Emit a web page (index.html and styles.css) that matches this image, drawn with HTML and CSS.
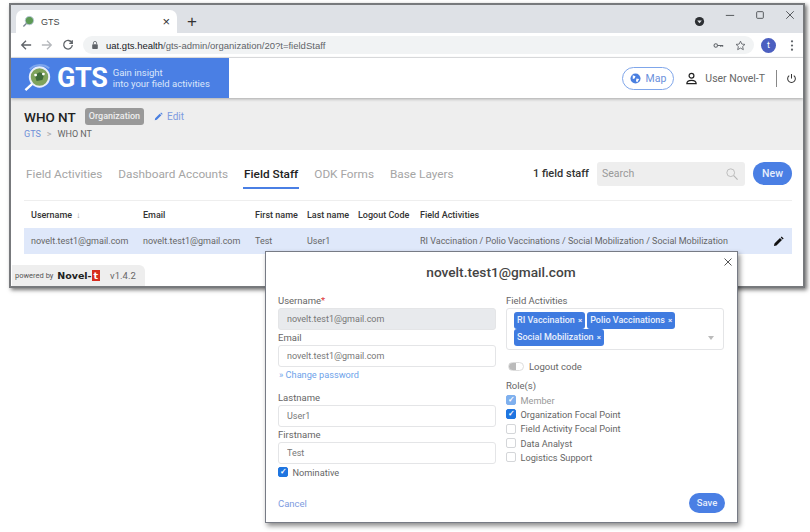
FILE: index.html
```html
<!DOCTYPE html>
<html lang="en">
<head>
    <meta charset="UTF-8">
    <link rel="stylesheet" href="styles.css">
    <title>GTS</title>
</head>
<body>
    <div class="window">
        <div class="tabstrip">
            <div class="tab">
                <svg class="favicon" viewBox="0 0 14 14"><circle cx="8" cy="6" r="4.500" fill="#5d9a55" stroke="#b9c7d8"/><path d="M5 9l-3.500 3.500" stroke="#7b8794" stroke-width="1.500"/></svg>
                <span class="tab-title">GTS</span>
                <span class="tab-close">×</span>
            </div>
            <span class="tab-new">+</span>
            <span class="chrome-spacer"></span>
            <svg class="win-badge" viewBox="0 0 12 12"><circle cx="6" cy="6" r="5" fill="#2c2f33"/><path d="M3.500 4.800h5L6 8z" fill="#dee1e6"/></svg>
            <svg class="win-btn" viewBox="0 0 12 12"><path d="M1 6.500h10" stroke="#3c4043"/></svg>
            <svg class="win-btn" viewBox="0 0 12 12"><rect x="2" y="2" width="8" height="8" rx="1" fill="none" stroke="#3c4043"/></svg>
            <svg class="win-btn" viewBox="0 0 12 12"><path d="M1.500 1.500l9 9M10.500 1.500l-9 9" stroke="#3c4043"/></svg>
        </div>
        <div class="toolbar">
            <svg class="nav-icon" viewBox="0 0 14 14"><path d="M13 7H2M7 2L2 7l5 5" fill="none" stroke="#5f6368" stroke-width="1.500"/></svg>
            <svg class="nav-icon" viewBox="0 0 14 14"><path d="M1 7h11M7 2l5 5-5 5" fill="none" stroke="#b5b8bc" stroke-width="1.500"/></svg>
            <svg class="nav-icon" viewBox="0 0 14 14"><path d="M11.500 4.500A5 5 0 1 0 12 7M12 1.500v3.500H8.500" fill="none" stroke="#5f6368" stroke-width="1.500"/></svg>
            <div class="omnibox">
                <svg class="lock" viewBox="0 0 10 12"><rect x="1.500" y="5" width="7" height="6" rx="1" fill="#5f6368"/><path d="M3 5V3.500a2 2 0 0 1 4 0V5" fill="none" stroke="#5f6368"/></svg>
                <span class="url"><b>uat.gts.health</b>/gts-admin/organization/20?t=fieldStaff</span>
                <span class="chrome-spacer"></span>
                <svg class="omni-icon" viewBox="0 0 14 14"><circle cx="3.500" cy="7" r="2.200" fill="none" stroke="#5f6368" stroke-width="1.300"/><path d="M6 7h7M10 7v2M12.300 7v1.500" fill="none" stroke="#5f6368" stroke-width="1.300"/></svg>
                <svg class="omni-icon" viewBox="0 0 14 14"><path d="M7 1.500l1.700 3.700 4 .4-3 2.700.9 4L7 10.300l-3.600 2 .9-4-3-2.700 4-.4z" fill="none" stroke="#5f6368" stroke-width="1.100"/></svg>
            </div>
            <span class="avatar">t</span>
            <svg class="dots" viewBox="0 0 4 14"><circle cx="2" cy="2.500" r="1.200" fill="#5f6368"/><circle cx="2" cy="7" r="1.200" fill="#5f6368"/><circle cx="2" cy="11.500" r="1.200" fill="#5f6368"/></svg>
        </div>
        <header class="app-header">
            <div class="brand">
                <svg class="brand-mark" viewBox="0 0 34 30">
                    <path d="M7 6a15 15 0 0 1 20 -1" fill="none" stroke="#7ea6ec" stroke-width="2"/>
                    <circle cx="17" cy="14" r="10" fill="#7fa35c" stroke="#e8eefb" stroke-width="2"/>
                    <path d="M12 12l5-3 5 2-2 6-6 1z" fill="#3f6b3a"/>
                    <circle cx="13" cy="12" r="1.500" fill="#fff"/><circle cx="21" cy="11" r="1.500" fill="#fff"/>
                    <path d="M9.500 21L2.500 27.500" stroke="#fff" stroke-width="2.500"/>
                </svg>
                <span class="brand-name">GTS</span>
                <span class="brand-tag">Gain insight<br>into your field activities</span>
            </div>
            <div class="header-right">
                <a class="map-btn">
                    <svg class="map-globe" viewBox="0 0 12 12"><circle cx="6" cy="6" r="5.500" fill="#4a7fe0"/><path d="M3 2.500l3 1-1 2.500-2 .5zM7 6l3 .5-2 3.500-1.500-1z" fill="#fff"/></svg>
                    Map
                </a>
                <svg class="user-icon" viewBox="0 0 14 14"><circle cx="7" cy="4" r="2.600" fill="none" stroke="#222" stroke-width="1.300"/><path d="M2 12.500c0-2.500 2-3.500 5-3.500s5 1 5 3.500z" fill="none" stroke="#222" stroke-width="1.300"/></svg>
                <span class="user-name">User Novel-T</span>
                <span class="header-sep"></span>
                <svg class="power" viewBox="0 0 12 12"><path d="M6 1v5M3.500 2.800a4.200 4.200 0 1 0 5 0" fill="none" stroke="#333" stroke-width="1.100"/></svg>
            </div>
        </header>
        <div class="page-head">
            <div class="title-row">
                <h1>WHO NT</h1>
                <span class="badge">Organization</span>
                <a class="edit">
                    <svg class="edit-icon" viewBox="0 0 12 12"><path d="M1 11l.6-2.800 6-6 2.200 2.200-6 6zM8.400 1.500l1-1 2.200 2.200-1 1z" fill="#4a7fe0"/></svg>
                    Edit
                </a>
            </div>
            <div class="crumbs"><a>GTS</a><span class="crumb-sep">&gt;</span><span>WHO NT</span></div>
        </div>
        <main class="content">
            <div class="tools">
                <nav class="tabs">
                    <a>Field Activities</a>
                    <a>Dashboard Accounts</a>
                    <a class="active">Field Staff</a>
                    <a>ODK Forms</a>
                    <a>Base Layers</a>
                </nav>
                <span class="count">1 field staff</span>
                <div class="search">
                    <span>Search</span>
                    <svg class="search-icon" viewBox="0 0 14 14"><circle cx="5.500" cy="5.500" r="4.500" fill="none" stroke="#b5b5b5"/><path d="M9 9l4.500 4.500" stroke="#b5b5b5" stroke-width="1.300"/></svg>
                </div>
                <a class="btn-primary btn-new">New</a>
            </div>
            <div class="table">
                <div class="row row-head">
                    <span class="c1">Username <small>↓</small></span>
                    <span class="c2">Email</span>
                    <span class="c3">First name</span>
                    <span class="c4">Last name</span>
                    <span class="c5">Logout Code</span>
                    <span class="c6">Field Activities</span>
                </div>
                <div class="row row-body">
                    <span class="c1">novelt.test1@gmail.com</span>
                    <span class="c2">novelt.test1@gmail.com</span>
                    <span class="c3">Test</span>
                    <span class="c4">User1</span>
                    <span class="c5"></span>
                    <span class="c6">RI Vaccination / Polio Vaccinations / Social Mobilization / Social Mobilization</span>
                    <svg class="row-edit" viewBox="0 0 12 12"><path d="M1 11l.6-2.800 6-6 2.200 2.200-6 6zM8.400 1.500l1-1 2.200 2.200-1 1z" fill="#111"/></svg>
                </div>
            </div>
        </main>
        <div class="powered">powered by <b class="novel">Novel-<i>t</i></b><span class="version">v1.4.2</span></div>
    </div>

    <form class="modal">
        <svg class="modal-close" viewBox="0 0 8 8"><path d="M.5.500l7 7M7.500.500l-7 7" stroke="#555"/></svg>
        <h2>novelt.test1@gmail.com</h2>
        <div class="modal-cols">
            <div class="col">
                <label class="field-label">Username<em>*</em></label>
                <input class="input input-off" type="text" value="novelt.test1@gmail.com" disabled>
                <label class="field-label">Email</label>
                <input class="input" type="text" value="novelt.test1@gmail.com">
                <a class="change-pass">» Change password</a>
                <label class="field-label label-last">Lastname</label>
                <input class="input" type="text" value="User1">
                <label class="field-label">Firstname</label>
                <input class="input" type="text" value="Test">
                <div class="check check-nom"><span class="box on">✓</span>Nominative</div>
            </div>
            <div class="col">
                <label class="field-label">Field Activities</label>
                <div class="multi">
                    <span class="chip">RI Vaccination<i>×</i></span>
                    <span class="chip">Polio Vaccinations<i>×</i></span>
                    <span class="chip">Social Mobilization<i>×</i></span>
                    <span class="caret"></span>
                </div>
                <div class="logout"><span class="toggle"></span>Logout code</div>
                <label class="field-label">Role(s)</label>
                <div class="check check-off"><span class="box on faded">✓</span>Member</div>
                <div class="check"><span class="box on">✓</span>Organization Focal Point</div>
                <div class="check"><span class="box"></span>Field Activity Focal Point</div>
                <div class="check"><span class="box"></span>Data Analyst</div>
                <div class="check"><span class="box"></span>Logistics Support</div>
            </div>
        </div>
        <div class="modal-foot">
            <a class="cancel">Cancel</a>
            <a class="btn-primary btn-save">Save</a>
        </div>
    </form>
</body>
</html>
```

FILE: styles.css
```css
* { box-sizing: border-box; }
body { margin: 0; background: #fff; font-family: Roboto, "Liberation Sans", sans-serif; color: #555; overflow: hidden; height: 532px; position: relative; }
h1, h2 { margin: 0; }

/* browser window */
.window { position: relative; width: 796px; height: 285px; margin: 3px 0 0 9px; border: 2px solid #77797c; box-shadow: 2px 2px 4px rgba(0,0,0,.55); background: #fff; overflow: hidden; }
.tabstrip { height: 28px; background: #dee1e6; display: flex; align-items: flex-end; padding-left: 5px; }
.tab { width: 161px; height: 23px; background: #fff; border-radius: 7px 7px 0 0; display: flex; align-items: center; padding: 0 7px 0 6px; font-family: "Liberation Sans", sans-serif; font-size: 9px; color: #444; }
.favicon { width: 13px; height: 13px; margin-right: 6px; }
.tab-title { flex: 1; }
.tab-close { font-size: 13px; color: #333; }
.tab-new { font-family: "Liberation Sans", sans-serif; font-size: 17px; line-height: 23px; width: 30px; text-align: center; color: #333; }
.chrome-spacer { flex: 1; }
.win-badge { width: 11px; height: 11px; margin: 0 20px 6px 0; }
.win-btn { width: 10px; height: 10px; margin: 0 20px 13px 0; }
.win-btn:last-child { margin-right: 8px; }
.toolbar { height: 25px; background: #fff; border-bottom: 1px solid #e3e4e6; display: flex; align-items: center; padding-left: 9px; }
.nav-icon { width: 12px; height: 12px; margin-right: 9px; }
.omnibox { width: 671px; height: 18px; background: #f1f3f4; border-radius: 9px; display: flex; align-items: center; padding: 0 8px 0 8px; }
.lock { width: 8px; height: 10px; margin-right: 7px; }
.url { font-family: "Liberation Sans", sans-serif; font-size: 9.500px; color: #5f6368; }
.url b { font-weight: 400; color: #202124; }
.omni-icon { width: 11px; height: 11px; margin-left: 11px; }
.avatar { width: 15px; height: 15px; margin-left: 7px; border-radius: 50%; background: #4c5fc0; color: #fff; font-size: 9px; text-align: center; line-height: 15px; }
.dots { width: 4px; height: 13px; margin-left: 14px; }

/* app header */
.app-header { position: relative; height: 40px; background: #fff; display: flex; justify-content: space-between; box-shadow: 0 1px 3px rgba(0,0,0,.3); }
.brand { width: 218px; background: #4a7fe4; display: flex; align-items: center; padding-left: 12px; color: #fff; }
.brand-mark { width: 33px; height: 30px; }
.brand-name { font-size: 27px; font-weight: 700; margin-left: 1px; letter-spacing: -.3px; }
.brand-tag { margin-left: 5px; font-size: 9.500px; line-height: 11px; color: #dbe6fb; }
.header-right { display: flex; align-items: center; padding-right: 6px; }
.map-btn { display: flex; align-items: center; height: 23px; padding: 0 7px; border: 1px solid #7fa6ea; border-radius: 12px; font-size: 10.500px; color: #6a90dc; }
.map-globe { width: 11px; height: 11px; margin-right: 5px; }
.user-icon { width: 13px; height: 13px; margin-left: 11px; }
.user-name { margin-left: 7px; font-size: 10.500px; color: #666; }
.header-sep { width: 1px; height: 17px; margin: 0 9px 0 11px; background: #888; }
.power { width: 11px; height: 11px; }

.page-head { height: 52px; background: #eee; padding: 9px 13px; }
.title-row { display: flex; align-items: center; height: 19px; }
h1 { font-size: 13.500px; font-weight: 500; color: #222; }
.badge { margin-left: 9px; padding: 0 4px; height: 17px; line-height: 17px; border-radius: 3px; background: #999; color: #eee; font-size: 9px; font-weight: 500; }
.edit { display: flex; align-items: center; margin-left: 10px; font-size: 10px; color: #7d9be0; }
.edit-icon { width: 9px; height: 9px; margin-right: 4px; }
.crumbs { margin-top: 3px; font-size: 9px; color: #666; display: flex; }
.crumbs a { color: #6f8fd8; }
.crumb-sep { margin: 0 6px; color: #aaa; }

/* tabs and table */
.content { padding: 10px 11px 0 13px; }
.tools { display: flex; align-items: center; height: 27px; }
.tabs { flex: 1; display: flex; gap: 16px; font-size: 11.800px; color: #a5a5a5; height: 27px; padding-top: 7px; padding-left: 2px; }
.tabs a { height: 25px; }
.tabs .active { color: #222; font-weight: 500; border-bottom: 2px solid #4a7fe4; height: 22px; margin: 0 -1px; padding: 0 1px; }
.count { font-size: 11px; color: #333; margin-right: 8px; font-weight: 500; }
.search { width: 148px; height: 24px; background: #eee; border-radius: 3px; padding: 0 7px 0 5px; display: flex; align-items: center; justify-content: space-between; font-size: 10.500px; color: #999; }
.search-icon { width: 12px; height: 12px; }
.btn-primary { background: #4a7fe4; color: #e6eefc; font-weight: 500; font-size: 10.500px; text-align: center; display: block; }
.btn-new { width: 39px; height: 23px; line-height: 23px; border-radius: 12px; margin-left: 8px; }
.table { margin-top: 13px; border-top: 1px solid #eee; }
.row { display: flex; align-items: center; font-size: 9px; padding-left: 7px; }
.row-head { height: 27px; color: #333; font-weight: 500; }
.row-head small { color: #999; font-size: 8px; margin-left: 2px; }
.row-body { position: relative; height: 26px; background: #dfe8fa; color: #666; }
.c1 { width: 112px; }
.c2 { width: 112px; }
.c3 { width: 52px; }
.c4 { width: 51px; }
.c5 { width: 62px; }
.c6 { white-space: nowrap; }
.row-edit { position: absolute; right: 8px; top: 8px; width: 11px; height: 11px; }
.powered { position: absolute; left: 1px; bottom: 0; width: 133px; height: 21px; padding: 0 5px 0 3px; border-radius: 0 6px 0 0; background: #eee; display: flex; align-items: center; font-size: 7.500px; color: #555; white-space: pre; }
.novel { margin-left: 2px; font-family: "DejaVu Sans", sans-serif; font-size: 9.500px; font-weight: 700; color: #222; }
.novel i { font-style: normal; color: #fff; background: #d62d20; padding: 0 2px; }
.version { margin-left: 10px; font-size: 9.500px; color: #666; }

/* modal over the window */
.modal { position: absolute; left: 265px; top: 251px; width: 473px; height: 272px; background: #fff; border: 1px solid #777b85; box-shadow: 2px 3px 5px rgba(0,0,0,.45); padding: 12px 13px 0 12px; }
.modal-close { position: absolute; right: 5px; top: 6px; width: 8px; height: 8px; }
.modal h2 { text-align: center; font-size: 13.700px; font-weight: 500; color: #444; line-height: 16px; }
.modal-cols { display: flex; gap: 10px; margin-top: 15px; }
.col { width: 218px; display: flex; flex-direction: column; }
.field-label { font-size: 9.500px; line-height: 12px; color: #666; margin-bottom: 1px; }
.field-label em { color: #d33; font-style: normal; }
.label-last { margin-top: 11px; }
.input { width: 218px; height: 22px; border: 1px solid #e4e5e7; border-radius: 3px; padding: 0 7px 0 8px; font: 9px Roboto, sans-serif; color: #777; background: #fff; margin-bottom: 2px; }
.input-off { background: #e8eaed; }
.change-pass { font-size: 9.200px; color: #6ea3ea; line-height: 12px; margin-left: 1px; }
.check { display: flex; align-items: center; height: 14.300px; font-size: 9.200px; color: #666; }
.check-nom { margin-top: -1px; }
.check-off { color: #999; }
.box { width: 10px; height: 10px; margin-right: 4.500px; border: 1px solid #d4d6d9; border-radius: 2px; font-size: 8px; line-height: 8px; text-align: center; color: #fff; font-weight: 700; }
.box.on { background: #1f75e0; border-color: #1f75e0; }
.box.faded { background: #7fb0ee; border-color: #7fb0ee; }
.multi { position: relative; height: 42px; width: 218px; border: 1px solid #e4e5e7; border-radius: 3px; padding: 3px 7px; display: flex; flex-wrap: wrap; align-content: flex-start; gap: 0 2px; }
.chip { height: 17px; line-height: 17px; background: #3f7be0; color: #e8effc; font-size: 9px; font-weight: 500; border-radius: 3px; padding: 0 3px; }
.chip i { font-style: normal; font-size: 8px; margin-left: 3px; }
.caret { position: absolute; right: 9px; top: 27px; border: 3px solid transparent; border-top: 4px solid #bbb; }
.logout { display: flex; align-items: center; margin: 10px 0 8px 2px; font-size: 9.500px; color: #666; height: 12px; }
.toggle { width: 16px; height: 9px; margin-right: 5px; border: 1px solid #ddd; border-radius: 5px; background: linear-gradient(90deg, #bbb 50%, #fff 50%); }
.modal-foot { position: absolute; left: 12px; right: 12px; bottom: 9px; display: flex; align-items: center; justify-content: space-between; }
.cancel { font-size: 9.500px; color: #7d9be0; }
.btn-save { width: 36px; height: 20px; line-height: 20px; border-radius: 10px; font-size: 9.500px; }
```
